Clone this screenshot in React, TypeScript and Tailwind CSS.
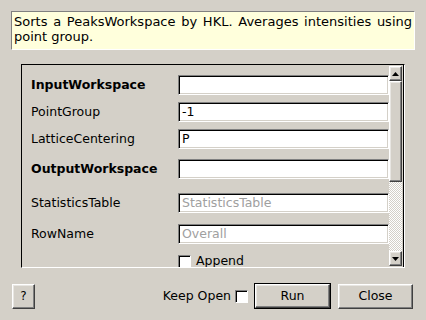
import React from "react";

const raised =
  "border border-t-white border-l-white border-r-[#404040] border-b-[#404040] shadow-[inset_-1px_-1px_0_#808080,inset_1px_1px_0_#e8e6e2]";

function Field({ value, placeholder }: { value?: string; placeholder?: string }) {
  return (
    <div className="flex-1 h-[20px] bg-white border border-t-[#808080] border-l-[#808080] border-r-white border-b-white shadow-[inset_1px_1px_0_#000,inset_-1px_-1px_0_#d4d0c8] flex items-center pl-[3px] leading-none">
      {value ? (
        <span className="text-[#000]">{value}</span>
      ) : placeholder ? (
        <span className="text-[#a0a0a0]">{placeholder}</span>
      ) : null}
    </div>
  );
}

function Row({ label, bold, mt, children }: { label: string; bold?: boolean; mt: string; children: React.ReactNode }) {
  return (
    <div className={`flex items-center ${mt}`}>
      <div className={`w-[156px] pl-[9px] pt-[1px] shrink-0 ${bold ? "font-bold" : ""}`}>{label}</div>
      {children}
    </div>
  );
}

function Box({ className = "" }: { className?: string }) {
  return (
    <div
      className={`w-[13px] h-[13px] bg-white border border-t-[#808080] border-l-[#808080] border-r-white border-b-white shadow-[inset_1px_1px_0_#000] ${className}`}
    />
  );
}

export default function App() {
  return (
    <div
      className="w-[426px] h-[320px] bg-[#d4d0c8] text-[12.5px] text-black overflow-hidden flex flex-col"
      style={{ fontFamily: '"DejaVu Sans", sans-serif' }}
    >
      <div className="mx-[11px] mt-[11px] h-[39px] bg-[#ffffdc] border border-t-[#808080] border-l-[#808080] border-r-white border-b-white px-[2px] pt-[2px] leading-[15px] text-[13px] text-justify [text-align-last:left]">
        Sorts a PeaksWorkspace by HKL. Averages intensities using point group.
      </div>

      <div className="ml-[21px] mt-[14px] w-[384px] h-[204px] border border-t-[#000] border-l-[#000] border-r-white border-b-white shadow-[inset_-1px_-1px_0_#d4d0c8] flex">
        <div className="flex-1 overflow-hidden h-full">
          <Row label="InputWorkspace" bold mt="mt-[10px]">
            <Field />
          </Row>
          <Row label="PointGroup" mt="mt-[7px]">
            <Field value="-1" />
          </Row>
          <Row label="LatticeCentering" mt="mt-[7px]">
            <Field value="P" />
          </Row>
          <Row label="OutputWorkspace" bold mt="mt-[10px]">
            <Field />
          </Row>
          <Row label="StatisticsTable" mt="mt-[14px]">
            <Field placeholder="StatisticsTable" />
          </Row>
          <Row label="RowName" mt="mt-[11px]">
            <Field placeholder="Overall" />
          </Row>
          <div className="flex items-center mt-[8px] pl-[156px]">
            <Box />
            <span className="ml-[5px]">Append</span>
          </div>
        </div>
        <div className="w-[15px] h-full flex flex-col py-[1px] pr-[1px] border-r border-[#000]">
          <div className={`h-[15px] ${raised} bg-[#d4d0c8] flex items-center justify-center`}>
            <svg width="7" height="4" viewBox="0 0 7 4"><polygon points="3.5,0 7,4 0,4" fill="#000" /></svg>
          </div>
          <div className={`h-[101px] ${raised} bg-[#d4d0c8]`} />
          <div className="flex-1 bg-[repeating-conic-gradient(#d4d0c8_0_25%,#ffffff_0_50%)] bg-[length:2px_2px]" />
          <div className={`h-[15px] ${raised} bg-[#d4d0c8] flex items-center justify-center`}>
            <svg width="7" height="4" viewBox="0 0 7 4"><polygon points="0,0 7,0 3.5,4" fill="#000" /></svg>
          </div>
        </div>
      </div>

      <div className="mt-[15px] flex items-center pl-[12px] pr-[13px] text-[12.5px]">
        <div className={`w-[23px] h-[25px] ${raised} flex items-center justify-center text-[12px]`}>?</div>
        <div className="flex-1" />
        <span>Keep Open</span>
        <Box className="ml-[4px]" />
        <div className="ml-[6px] w-[77px] h-[26px] border border-black">
          <div className={`w-full h-full ${raised} flex items-center justify-center`}>Run</div>
        </div>
        <div className={`ml-[7px] w-[75px] h-[25px] ${raised} flex items-center justify-center`}>Close</div>
      </div>
    </div>
  );
}
